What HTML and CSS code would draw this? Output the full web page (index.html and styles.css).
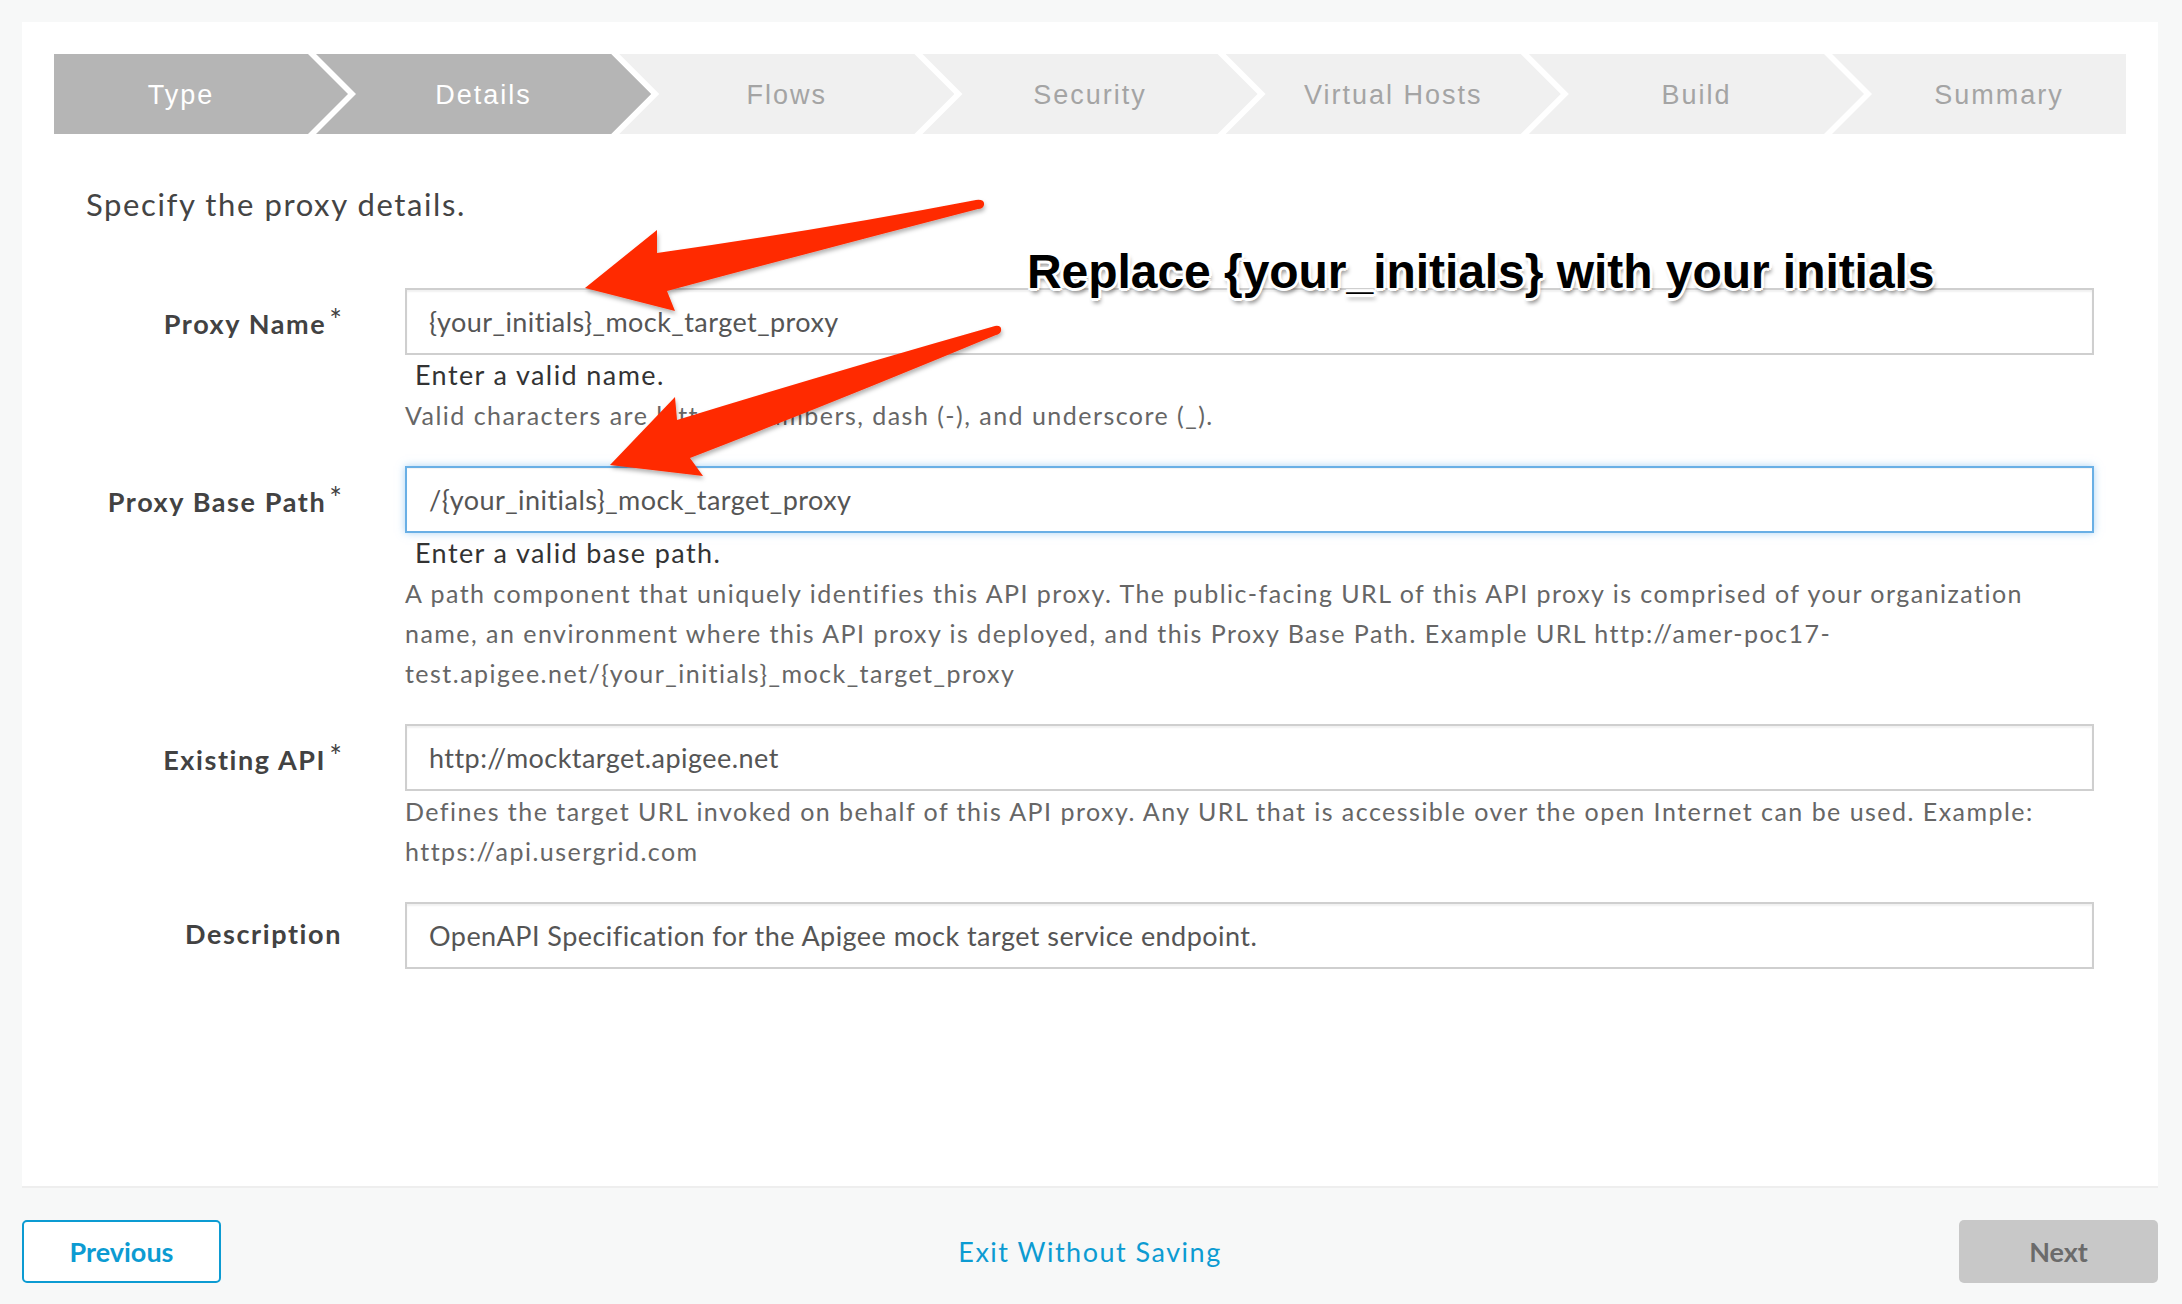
FILE: index.html
```html
<!DOCTYPE html>
<html lang="en">
<head>
<meta charset="utf-8">
<title>New Proxy - Details</title>
<link rel="stylesheet" href="styles.css">
</head>
<body>
<div class="page">
  <div class="card">
    <div class="steps">
      <div class="step done">Type</div>
      <div class="step done">Details</div>
      <div class="step">Flows</div>
      <div class="step">Security</div>
      <div class="step">Virtual Hosts</div>
      <div class="step">Build</div>
      <div class="step">Summary</div>
    </div>

    <p class="intro">Specify the proxy details.</p>

    <div class="form">
      <div class="row">
        <label class="label">Proxy Name<span class="req">*</span></label>
        <div class="field">
          <div class="input">{your_initials}_mock_target_proxy</div>
          <div class="error">Enter a valid name.</div>
          <div class="help">Valid characters are letters, numbers, dash (-), and underscore (_).</div>
        </div>
      </div>
      <div class="row">
        <label class="label">Proxy Base Path<span class="req">*</span></label>
        <div class="field">
          <div class="input focus">/{your_initials}_mock_target_proxy</div>
          <div class="error">Enter a valid base path.</div>
          <div class="help">A path component that uniquely identifies this API proxy. The public-facing URL of this API proxy is comprised of your organization name, an environment where this API proxy is deployed, and this Proxy Base Path. Example URL http://amer-poc17-test.apigee.net/{your_initials}_mock_target_proxy</div>
        </div>
      </div>
      <div class="row">
        <label class="label">Existing API<span class="req">*</span></label>
        <div class="field">
          <div class="input">http://mocktarget.apigee.net</div>
          <div class="help">Defines the target URL invoked on behalf of this API proxy. Any URL that is accessible over the open Internet can be used. Example: https://api.usergrid.com</div>
        </div>
      </div>
      <div class="row">
        <label class="label">Description</label>
        <div class="field">
          <div class="input">OpenAPI Specification for the Apigee mock target service endpoint.</div>
        </div>
      </div>
    </div>
  </div>

  <div class="footer">
    <button class="btn btn-prev">Previous</button>
    <a class="exit">Exit Without Saving</a>
    <button class="btn btn-next">Next</button>
  </div>

  <svg class="arrows" width="2182" height="1304" viewBox="0 0 2182 1304">
    <defs>
      <filter id="sh" x="-10%" y="-10%" width="120%" height="130%">
        <feDropShadow dx="1" dy="3" stdDeviation="2" flood-color="#000" flood-opacity="0.3"/>
      </filter>
    </defs>
    <path filter="url(#sh)" fill="#ff2a00" d="M585,288 L657,230 L657,253 Q820,230 976,200 Q985,199 984,205 Q983,209 978,209 Q820,250 667,291 L675,311 Z"/>
    <path filter="url(#sh)" fill="#ff2a00" d="M610,465 L675,397 L677,420 Q840,370 995,326 Q1002,325 1001,331 Q1000,334 996,335 Q840,400 690,458 L703,476 Z"/>
  </svg>
  <div class="note">Replace {your_initials} with your initials</div>
</div>
</body>
</html>
```

FILE: styles.css
```css
* { box-sizing: border-box; }
html, body { margin: 0; padding: 0; }
body {
  background: #f7f8f8;
  font-family: Lato, "Open Sans", "Liberation Sans", sans-serif;
  color: #444;
}
.page {
  position: relative;
  width: 2182px;
  height: 1304px;
  padding: 22px 24px 0 22px;
}
.card {
  background: #fff;
  height: 1166px;
  padding: 32px;
  border-bottom: 2px solid #eeeeee;
}

/* wizard steps */
.steps {
  display: flex;
  height: 80px;
}
.step {
  flex: 1 1 0;
  margin-left: -32px;
  display: flex;
  align-items: center;
  justify-content: center;
  padding-top: 3px;
  background: #f0f0f0;
  color: #a4a4a4;
  font-family: "Liberation Sans", Arial, sans-serif;
  font-size: 27px;
  letter-spacing: 2px;
  clip-path: polygon(0 0, calc(100% - 40px) 0, 100% 50%, calc(100% - 40px) 100%, 0 100%, 40px 50%);
}
.step:first-child {
  flex: 0 0 294px;
  margin-left: 0;
  padding-right: 40px;
  clip-path: polygon(0 0, calc(100% - 40px) 0, 100% 50%, calc(100% - 40px) 100%, 0 100%);
}
.step:last-child {
  flex: 0 0 294px;
  padding-left: 40px;
  clip-path: polygon(0 0, 100% 0, 100% 100%, 0 100%, 40px 50%);
}
.step.done {
  background: #b5b5b5;
  color: #fff;
}

.intro {
  margin: 52px 0 0 32px;
  font-size: 31px;
  line-height: 36px;
  color: #444;
  letter-spacing: 1.6px;
}

.form {
  margin-top: 66px;
  padding-right: 32px;
}
.row {
  display: grid;
  grid-template-columns: 288px 1fr;
  column-gap: 63px;
  margin-bottom: 31px;
}
.label {
  text-align: right;
  font-weight: 700;
  font-size: 27px;
  line-height: 63px;
  color: #424242;
  white-space: nowrap;
  letter-spacing: 1.6px;
}
.req {
  font-weight: 400;
  font-size: 30px;
  vertical-align: 3px;
  margin-left: 3px;
  letter-spacing: 0;
}
.input {
  height: 67px;
  border: 2px solid #cfcfcf;
  box-shadow: inset 0 2px 2px rgba(0,0,0,0.06);
  padding: 0 22px;
  display: flex;
  align-items: center;
  font-size: 27px;
  color: #555;
  white-space: nowrap;
  overflow: hidden;
  letter-spacing: 0.45px;
}
.input.focus {
  border-color: #69afe5;
  box-shadow: inset 0 1px 1px rgba(0,0,0,0.05), 0 0 8px rgba(102,175,233,0.55);
}
.error {
  font-size: 27px;
  line-height: 40px;
  color: #333;
  padding-left: 10px;
  letter-spacing: 1.4px;
}
.help {
  font-size: 25px;
  line-height: 40px;
  color: #666;
  letter-spacing: 1.47px;
  padding-right: 40px;
}

/* footer */
.footer {
  display: flex;
  align-items: center;
  justify-content: space-between;
  padding-top: 32px;
}
.btn {
  height: 63px;
  width: 199px;
  border-radius: 5px;
  font-family: Lato, "Liberation Sans", sans-serif;
  font-size: 27px;
  font-weight: 700;
}
.btn-prev {
  background: #fff;
  border: 2px solid #0c9bd2;
  color: #0c9bd2;
}
.btn-next {
  background: #c8c8c8;
  border: 0;
  color: #6b6b6b;
}
.exit {
  font-size: 27px;
  color: #0c9bd2;
  letter-spacing: 1.5px;
}

/* annotation overlay */
.arrows {
  position: absolute;
  left: 0;
  top: 0;
  pointer-events: none;
}
.note {
  position: absolute;
  left: 1027px;
  top: 244px;
  font-family: "Liberation Sans", Arial, sans-serif;
  font-weight: 700;
  font-size: 48px;
  line-height: 56px;
  color: #000;
  white-space: nowrap;
  letter-spacing: -0.05px;
  text-shadow:
    -2px -2px 0 #fff, 2px -2px 0 #fff, -2px 2px 0 #fff, 2px 2px 0 #fff,
    0 -3px 0 #fff, 0 3px 0 #fff, -3px 0 0 #fff, 3px 0 0 #fff,
    2px 5px 4px rgba(0,0,0,0.45);
}
```
